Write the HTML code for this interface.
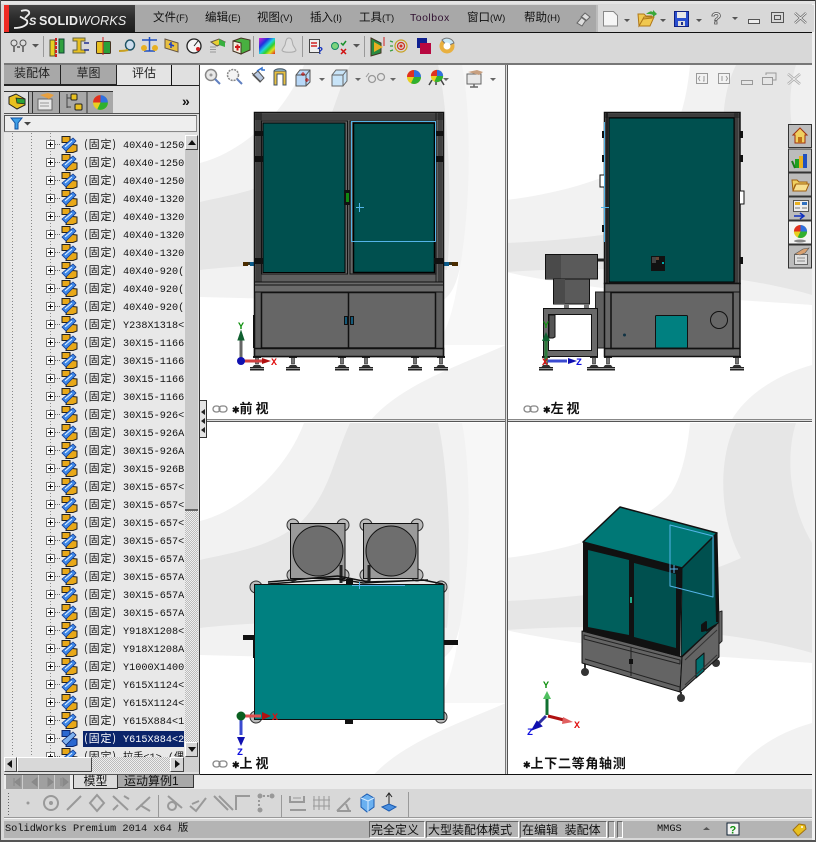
<!DOCTYPE html>
<html><head><meta charset="utf-8"><style>
html,body{margin:0;padding:0;background:#d8d8d8}
#w{position:relative;width:816px;height:842px;overflow:hidden;background:#d8d8d8;font-family:"Liberation Sans","WenQuanYi Zen Hei","Noto Sans CJK SC",sans-serif}
.a{position:absolute}
.m{position:absolute;top:11px;font-size:11.5px;line-height:15px;color:#111;white-space:nowrap}
.r{position:absolute;left:0;width:185px;height:18px;overflow:hidden}
.r svg{position:absolute;left:44px;top:0;width:36px;height:18px}
.r i{position:absolute;left:84px;top:2px;font-style:normal;font-size:10.2px;line-height:14px;color:#111;white-space:pre;font-family:"Liberation Mono","WenQuanYi Zen Hei",monospace}
.r b{font-weight:400;font-size:11px;font-family:"WenQuanYi Zen Hei","Noto Sans CJK SC",sans-serif;letter-spacing:.9px;margin-right:6px}
.r.s i{background:#0a246a;color:#fff;left:83px;padding-left:1px;width:100px}
.t{position:absolute;top:65px;height:20px;font-size:12px;line-height:17px;text-align:center;color:#222;box-sizing:border-box;background:#a8a8a8;border-right:1px solid #222;border-bottom:1px solid #222}
.ck{background-color:#eee;background-image:linear-gradient(45deg,#bbb 25%,transparent 25%,transparent 75%,#bbb 75%),linear-gradient(45deg,#bbb 25%,transparent 25%,transparent 75%,#bbb 75%);background-size:2px 2px;background-position:0 0,1px 1px}
.btn{position:absolute;background:#d4d4d4;border:1px solid;border-color:#fff #444 #444 #fff;box-sizing:border-box}
.f{position:absolute;top:821px;height:17px;font-size:12px;line-height:16px;background:#b4b4b4;border:1px solid;border-color:#666 #fff #fff #666;box-sizing:border-box;white-space:pre;color:#111;padding-left:1px}
.lb{position:absolute;font-size:13px;line-height:14px;font-weight:700;color:#111;white-space:nowrap;font-family:"Liberation Sans","WenQuanYi Zen Hei","Noto Sans CJK SC",sans-serif}
svg{display:block}
</style></head><body><div id="w">

<svg width="0" height="0" style="position:absolute"><defs>
<symbol id="bg" viewBox="0 0 306 356">
<rect width="306" height="356" fill="#fff"/>
<path d="M262 0H306V280H236C262 250 270 150 262 0Z" fill="#f7f7f7"/>
<path d="M0 98C40 88 85 50 104 0H262C270 40 272 120 262 190C258 220 250 235 236 238L0 232Z" fill="#f2f2f2"/>
<path d="M150 0C132 40 130 70 100 100C70 125 30 130 0 137V205C60 198 190 195 247 205C252 160 250 50 238 0Z" fill="#e6e6e6"/>
<path d="M306 280C260 300 200 320 170 356H306Z" fill="#f2f2f2"/>
</symbol>
<symbol id="bg2" viewBox="0 0 306 356">
<rect width="306" height="356" fill="#fff"/>
<path d="M0 135C60 128 130 108 165 70C178 50 182 20 184 0H306V240C260 236 100 230 0 207Z" fill="#f2f2f2"/>
<path d="M230 0C210 40 215 100 235 135C170 165 70 175 0 178V207C100 200 220 205 306 230V0Z" fill="#e6e6e6"/>
<path d="M290 0C280 30 282 80 306 120V0Z" fill="#f0f0f0"/>
<path d="M306 300C270 310 240 330 225 356H306Z" fill="#f2f2f2"/>
</symbol>
<symbol id="ti" viewBox="0 0 36 18">
<rect x="2.5" y="5.5" width="8" height="8" fill="#fff" stroke="#777"/><path d="M4 9.5h5M6.5 7v5" stroke="#111"/>
<path d="M11 9.5h5" stroke="#666" stroke-dasharray="1 1"/>
<path d="M18 1.500h8v6h-8z" fill="#e8a818" stroke="#222" stroke-width="1"/>
<path d="M24 9l9 1v6l-4 1.500h-7z" fill="#e8a818" stroke="#222" stroke-width="1"/>
<path d="M18 12L29 3l3 3-10 10z" fill="#3f88e8" stroke="#123a90" stroke-width=".8"/>
<path d="M21 12l7-6" stroke="#e8f4ff"/>
</symbol>
<symbol id="tis" viewBox="0 0 36 18">
<rect x="2.5" y="5.5" width="8" height="8" fill="#fff" stroke="#777"/><path d="M4 9.5h5M6.5 7v5" stroke="#111"/>
<path d="M11 9.5h5" stroke="#666" stroke-dasharray="1 1"/>
<path d="M18 1.500h8v6h-8z" fill="#2a68d0" stroke="#0a246a"/>
<path d="M24 9l9 1v6l-4 1.500h-7z" fill="#2a68d0" stroke="#0a246a"/>
<path d="M18 12L29 3l3 3-10 10z" fill="#7fb2f0" stroke="#0a246a" stroke-width=".8"/>
</symbol>
<symbol id="foot" viewBox="0 0 14 15">
<rect x="5.500" y="0" width="3" height="8" fill="#777" stroke="#222" stroke-width=".6"/><rect x="3" y="0" width="8" height="2" fill="#222"/>
<path d="M4 9h6l1.500 2h-9z" fill="#333"/><rect x="0" y="11" width="14" height="1.500" fill="#222"/><rect x="0" y="13" width="14" height="1.500" fill="#222"/>
</symbol>
<symbol id="ball" viewBox="0 0 16 16">
<circle cx="8" cy="8" r="7" fill="#e8d020"/><path d="M8 8V1A7 7 0 0 1 15 8Z" fill="#3070e0"/><path d="M8 8V1A7 7 0 0 0 1 8Z" fill="#e03020"/><path d="M8 8H15A7 7 0 0 1 5 14.300Z" fill="#30b030"/>
</symbol>
</defs></svg>

<!-- window frame -->
<div class="a" style="left:0;top:0;width:816px;height:4px;background:#e4e4e4;border-top:1px solid #333;box-sizing:border-box"></div>
<div class="a" style="left:0;top:0;width:1px;height:842px;background:#555"></div>
<div class="a" style="left:815px;top:0;width:1px;height:842px;background:#555"></div>
<div class="a" style="left:812px;top:4px;width:3px;height:836px;background:#f2f2f2"></div>
<div class="a" style="left:0;top:840px;width:816px;height:2px;background:#555"></div>

<!-- title -->
<div class="a" style="left:4px;top:5px;width:5px;height:27px;background:#ee2b24"></div>
<div class="a" style="left:9px;top:5px;width:126px;height:27px;background:linear-gradient(#444,#2b2b2b 50%,#1d1d1d)"></div>
<svg class="a" style="left:12px;top:7px" width="26" height="24"><path d="M2 21C10 21 17 18 15 13.500L8 9.500M9 4C15 2 18 4 17 7L13 11" fill="none" stroke="#eee" stroke-width="1.800"/><text x="17" y="18" font-family="Liberation Sans" font-size="11" font-style="italic" font-weight="700" fill="#eee">S</text></svg>
<div class="a" style="left:39px;top:13px;font-size:12.5px;line-height:16px;font-weight:700;color:#eee;white-space:nowrap;letter-spacing:.2px"><span>SOLID</span><span style="font-weight:400;font-style:italic">WORKS</span></div>
<div class="a" style="left:135px;top:5px;width:461px;height:27px;background:#a8a8a8"></div>
<div class="a" style="left:596px;top:5px;width:216px;height:27px;background:#d8d8d8;border-left:2px solid #bbb"></div>
<div class="a" style="left:4px;top:32px;width:808px;height:1px;background:#111"></div>
<span class="m" style="left:153px;">文件<small style="font-size:9.5px">(F)</small></span>
<span class="m" style="left:205px;">编辑<small style="font-size:9.5px">(E)</small></span>
<span class="m" style="left:257px;">视图<small style="font-size:9.5px">(V)</small></span>
<span class="m" style="left:310px;">插入<small style="font-size:9.5px">(I)</small></span>
<span class="m" style="left:359px;">工具<small style="font-size:9.5px">(T)</small></span>
<span class="m" style="left:410px;font-size:10.5px;letter-spacing:.5px;color:#301030">Toolbox</span>
<span class="m" style="left:467px;">窗口<small style="font-size:9.5px">(W)</small></span>
<span class="m" style="left:524px;">帮助<small style="font-size:9.5px">(H)</small></span>

<!-- top toolbar icons + all vector art -->
<svg class="a" style="left:0;top:0" width="816" height="132">
<path d="M577 23l5-6 4 3-4 6zM585 13l5 4-4 4-5-4z" fill="#ddd" stroke="#666"/>
<path d="M603.500 11.500h10l4 4v10.500h-14z" fill="#f6f6f6" stroke="#888"/>
<path d="M639 26l-1-12h6l2 2h6v2l-9 1zM639 26l5-9h10l-4 9z" fill="#f0c850" stroke="#b07818"/><path d="M646 14c4-3 5-3 7-2v-2l4 4-4 3v-2c-2-1-4-1-7-1z" fill="#3aa83a"/>
<rect x="674.500" y="11.500" width="14" height="15" fill="#2a4fd0" stroke="#102080"/><rect x="677" y="12" width="9" height="6" fill="#e8e8e8"/><rect x="678" y="21" width="7" height="5" fill="#ddd"/><rect x="681" y="22" width="2" height="3" fill="#20308a"/>
<g fill="#555"><path d="M624 19h6l-3 3zM660 19h6l-3 3zM696 19h6l-3 3zM732 17h6l-3 3zM32 44h7l-3.500 3.500zM353 44h7l-3.500 3.500z"/></g>
<text x="711" y="24" font-family="Liberation Sans" font-size="17" font-weight="700" fill="#e8e8e8" stroke="#555" stroke-width=".8">?</text>
<rect x="748.500" y="19.500" width="11" height="4" fill="#eee" stroke="#555"/>
<rect x="771.500" y="12.500" width="12" height="10" fill="none" stroke="#555"/><rect x="774.500" y="15.500" width="6" height="4" fill="none" stroke="#555"/>
<path d="M795 13l11 10M806 13l-11 10" stroke="#666" stroke-width="2.500"/>
<path d="M795 13l11 10M806 13l-11 10" stroke="#eee" stroke-width="1"/>

<g>
<circle cx="14" cy="43" r="3" fill="#ddd" stroke="#555"/><circle cx="23" cy="43" r="3" fill="#ddd" stroke="#555"/><path d="M14 46v6M23 46v6M17 47h3" stroke="#555" stroke-width="1.500"/>
<path d="M43.500 36v21" stroke="#999"/>
<path d="M50 40h5v16h-5z" fill="#e8d020" stroke="#553"/><path d="M59 39h5v14h-5z" fill="#30a040" stroke="#143"/><path d="M56 38v20" stroke="#d02020" stroke-width="2" stroke-dasharray="3 1"/>
<path d="M73 38h12v3h-4v9h4v3h-12v-3h4v-9h-4z" fill="#e8c020" stroke="#664"/><path d="M84 43h5M84 50h5" stroke="#203090" stroke-width="1.500"/>
<rect x="96.500" y="41.500" width="14" height="12" rx="1" fill="#e8c020" stroke="#432"/><rect x="103" y="42" width="7" height="11" fill="#28a038"/><path d="M103 37v18" stroke="#d02020"/>
<ellipse cx="130" cy="45" rx="4.500" ry="5" fill="#cde" stroke="#256" stroke-width="1.500"/><path d="M119 51c3 0 6 0 9-1" stroke="#c8a020" stroke-width="2" fill="none"/>
<path d="M142 40h15M149.500 37v14M144 51h11" stroke="#2050c0" stroke-width="1.500"/><circle cx="144" cy="48" r="3" fill="#e8b020"/><circle cx="155" cy="48" r="3" fill="#e8b020"/>
<path d="M165 39l13 4v9l-13-4z" fill="#e8c040" stroke="#654"/><path d="M169 44l5 2M171 42v6" stroke="#2040c0" stroke-width="1.500"/>
<circle cx="194" cy="46" r="7" fill="#f4f4f4" stroke="#222" stroke-width="1.300"/><path d="M194 46l4-5" stroke="#222"/><circle cx="198" cy="49" r="2" fill="#d02020"/>
<path d="M211 42l8-3 6 3-8 4z" fill="#e8d030" stroke="#654"/><path d="M219 39l6 3v5l-6-2z" fill="#38b040"/><path d="M210 47h6M210 49.500h6M210 52h6" stroke="#999"/>
<path d="M233 41l8-3 9 2v10l-9 4-8-3z" fill="#48b040" stroke="#432"/><path d="M233 41l8 2v11l-8-3z" fill="#f4f0e0" stroke="#432"/><path d="M235 47h5M237.500 44.500v6" stroke="#d01818" stroke-width="2"/>
<path d="M253.500 36v21" stroke="#999"/>
<defs><linearGradient id="rb" x1="0" y1="0" x2="1" y2="1"><stop offset="0" stop-color="#e020d0"/><stop offset=".3" stop-color="#2030e0"/><stop offset=".5" stop-color="#20d0e0"/><stop offset=".65" stop-color="#30d030"/><stop offset=".8" stop-color="#e0e020"/><stop offset="1" stop-color="#e02020"/></linearGradient></defs>
<rect x="259" y="38" width="16" height="16" fill="url(#rb)"/>
<path d="M289 38c3 0 3 3 4 7l3 5c0 3-14 3-14 0l3-5c1-4 1-7 4-7z" fill="#ddd" stroke="#aaa"/>
<path d="M302.500 36v21" stroke="#999"/>
<rect x="309.500" y="39.500" width="10" height="13" fill="#eee" stroke="#444"/><path d="M311 43h6M311 46h6" stroke="#d02020" stroke-width="1.500"/><text x="317" y="54" font-family="Liberation Sans" font-size="10" font-weight="700" fill="#1030c0">?</text>
<circle cx="335" cy="46" r="3.500" fill="#7cd47c" stroke="#186"/><path d="M341 43l2 2 3-4" stroke="#18902a" fill="none" stroke-width="1.500"/><path d="M341 49l5 5M346 49l-5 5" stroke="#d01010" stroke-width="1.500"/>
<path d="M364.500 36v21" stroke="#999"/>
<path d="M371 38l10 5v10l-10 3z" fill="#2a8a40" stroke="#432"/><path d="M374 42l9 5-9 5z" fill="#e8b020"/><path d="M384 37v9" stroke="#d02020"/>
<g fill="none" stroke-width="1.200"><circle cx="401" cy="46" r="6" stroke="#c8a020"/><circle cx="401" cy="46" r="3.500" stroke="#d03020"/><circle cx="401" cy="46" r="1.500" fill="#d03020" stroke="none"/><path d="M393 42l-3-1M393 46h-3M393 50l-3 1" stroke="#38a040"/></g>
<rect x="417" y="38" width="10" height="10" fill="#102090"/><rect x="420" y="43" width="11" height="11" fill="#b80840"/>
<circle cx="447" cy="46" r="7.500" fill="#e8b040"/><path d="M447 46l7-3a7.500 7.500 0 0 0-12-3z" fill="#c8e8f8" stroke="#777"/><circle cx="447" cy="46" r="3.500" fill="#fff"/>
</g>
</svg>

<div class="a" style="left:4px;top:63px;width:808px;height:2px;background:#777"></div>

<!-- left panel -->
<div class="a" style="left:4px;top:65px;width:195px;height:710px;background:#e0e0e0"></div>
<div class="a" style="left:199px;top:65px;width:1px;height:710px;background:#333"></div>
<div class="t" style="left:4px;width:57px">装配体</div>
<div class="t" style="left:61px;width:56px">草图</div>
<div class="t" style="left:117px;width:55px;background:#e4e4e4;border-bottom:1px solid #222;height:21px;font-size:12px;border-right:1px solid #111">评估</div>
<div class="a" style="left:172px;top:85px;width:27px;height:1px;background:#222"></div>
<div class="a" style="left:4px;top:85px;width:113px;height:1px;background:#222"></div>

<div class="a" style="left:4px;top:91px;width:109px;height:22px;background:#a8a8a8;border-top:1px solid #333;box-sizing:border-box"></div>
<div class="a" style="left:4px;top:91px;width:25px;height:22px;background:#e0e0e0;border-top:1px solid #333;border-right:1px solid #333;box-sizing:border-box"></div>
<div class="a" style="left:4px;top:113px;width:195px;height:1px;background:#555"></div>
<svg class="a" style="left:4px;top:90px" width="120" height="24">
<path d="M5 7l7-3 9 5v6l-8 4-8-5z" fill="#e8c020" stroke="#222"/><path d="M12 8l9 1v5l-8-1z" fill="#28a038" stroke="#222" stroke-width=".7"/>
<path d="M28.500 1v22M55.500 1v22M83 1v22" stroke="#333"/>
<rect x="34" y="9" width="14" height="11" fill="#e8e8e8" stroke="#666"/><path d="M36 5l8-2 6 2-5 4z" fill="#e8a040"/><path d="M36 13h9M36 16h9" stroke="#999"/>
<path d="M63 4v14M63 8h4M63 17h4" stroke="#444"/><rect x="67" y="4" width="6" height="6" rx="1" fill="#e8c020" stroke="#222"/><rect x="71" y="14" width="7" height="6" rx="1" fill="#e8c020" stroke="#222"/>
<use href="#ball" x="88" y="4" width="17" height="17"/>
</svg>
<div class="a" style="left:182px;top:93px;font:700 14px/16px 'Liberation Sans',sans-serif;color:#111">»</div>

<div class="a" style="left:4px;top:115px;width:193px;height:17px;background:#eee;border:1px solid #555;border-color:#555 #888 #888 #555;box-sizing:border-box"></div>
<svg class="a" style="left:10px;top:116px" width="26" height="15"><path d="M1 2h11L8 7v6H5V7z" fill="#3ea0e8" stroke="#1050a0"/><path d="M14 6h7l-3.500 3.500z" fill="#444"/></svg>

<!-- tree -->
<div class="a" style="left:4px;top:133px;width:181px;height:624px;background:#e8e8e8;overflow:hidden">
<svg class="a" style="left:0;top:0" width="60" height="624"><path d="M8.500 0V624M27.500 0V624M46.500 0V624" stroke="#888" stroke-dasharray="1 2"/></svg>
<div style="position:absolute;left:-4px;top:-133px;width:185px;height:770px">
<div class="r" style="top:135px"><svg><use href="#ti"/></svg><i><b>(固定)</b>40X40-1250</i></div>
<div class="r" style="top:153px"><svg><use href="#ti"/></svg><i><b>(固定)</b>40X40-1250</i></div>
<div class="r" style="top:171px"><svg><use href="#ti"/></svg><i><b>(固定)</b>40X40-1250</i></div>
<div class="r" style="top:189px"><svg><use href="#ti"/></svg><i><b>(固定)</b>40X40-1320</i></div>
<div class="r" style="top:207px"><svg><use href="#ti"/></svg><i><b>(固定)</b>40X40-1320</i></div>
<div class="r" style="top:225px"><svg><use href="#ti"/></svg><i><b>(固定)</b>40X40-1320</i></div>
<div class="r" style="top:243px"><svg><use href="#ti"/></svg><i><b>(固定)</b>40X40-1320</i></div>
<div class="r" style="top:261px"><svg><use href="#ti"/></svg><i><b>(固定)</b>40X40-920(</i></div>
<div class="r" style="top:279px"><svg><use href="#ti"/></svg><i><b>(固定)</b>40X40-920(</i></div>
<div class="r" style="top:297px"><svg><use href="#ti"/></svg><i><b>(固定)</b>40X40-920(</i></div>
<div class="r" style="top:315px"><svg><use href="#ti"/></svg><i><b>(固定)</b>Y238X1318&lt;</i></div>
<div class="r" style="top:333px"><svg><use href="#ti"/></svg><i><b>(固定)</b>30X15-1166</i></div>
<div class="r" style="top:351px"><svg><use href="#ti"/></svg><i><b>(固定)</b>30X15-1166</i></div>
<div class="r" style="top:369px"><svg><use href="#ti"/></svg><i><b>(固定)</b>30X15-1166</i></div>
<div class="r" style="top:387px"><svg><use href="#ti"/></svg><i><b>(固定)</b>30X15-1166</i></div>
<div class="r" style="top:405px"><svg><use href="#ti"/></svg><i><b>(固定)</b>30X15-926&lt;</i></div>
<div class="r" style="top:423px"><svg><use href="#ti"/></svg><i><b>(固定)</b>30X15-926A</i></div>
<div class="r" style="top:441px"><svg><use href="#ti"/></svg><i><b>(固定)</b>30X15-926A</i></div>
<div class="r" style="top:459px"><svg><use href="#ti"/></svg><i><b>(固定)</b>30X15-926B</i></div>
<div class="r" style="top:477px"><svg><use href="#ti"/></svg><i><b>(固定)</b>30X15-657&lt;</i></div>
<div class="r" style="top:495px"><svg><use href="#ti"/></svg><i><b>(固定)</b>30X15-657&lt;</i></div>
<div class="r" style="top:513px"><svg><use href="#ti"/></svg><i><b>(固定)</b>30X15-657&lt;</i></div>
<div class="r" style="top:531px"><svg><use href="#ti"/></svg><i><b>(固定)</b>30X15-657&lt;</i></div>
<div class="r" style="top:549px"><svg><use href="#ti"/></svg><i><b>(固定)</b>30X15-657A</i></div>
<div class="r" style="top:567px"><svg><use href="#ti"/></svg><i><b>(固定)</b>30X15-657A</i></div>
<div class="r" style="top:585px"><svg><use href="#ti"/></svg><i><b>(固定)</b>30X15-657A</i></div>
<div class="r" style="top:603px"><svg><use href="#ti"/></svg><i><b>(固定)</b>30X15-657A</i></div>
<div class="r" style="top:621px"><svg><use href="#ti"/></svg><i><b>(固定)</b>Y918X1208&lt;</i></div>
<div class="r" style="top:639px"><svg><use href="#ti"/></svg><i><b>(固定)</b>Y918X1208A</i></div>
<div class="r" style="top:657px"><svg><use href="#ti"/></svg><i><b>(固定)</b>Y1000X1400</i></div>
<div class="r" style="top:675px"><svg><use href="#ti"/></svg><i><b>(固定)</b>Y615X1124&lt;</i></div>
<div class="r" style="top:693px"><svg><use href="#ti"/></svg><i><b>(固定)</b>Y615X1124&lt;</i></div>
<div class="r" style="top:711px"><svg><use href="#ti"/></svg><i><b>(固定)</b>Y615X884&lt;1</i></div>
<div class="r s" style="top:729px"><svg><use href="#tis"/></svg><i><b>(固定)</b>Y615X884&lt;2</i></div>
<div class="r" style="top:747px"><svg><use href="#ti"/></svg><i><b>(固定)</b>拉手&lt;1&gt; (偶</i></div>
</div>
</div>

<!-- v scrollbar -->
<div class="a ck" style="left:185px;top:135px;width:13px;height:622px"></div>
<div class="a" style="left:185px;top:150px;width:13px;height:361px;background:#c8c8c8;border-bottom:2px solid #666;box-sizing:border-box"></div>
<div class="btn" style="left:185px;top:135px;width:13px;height:15px"></div>
<div class="a" style="left:188px;top:140px;border:4px solid transparent;border-bottom:5px solid #111;border-top:0"></div>
<div class="btn" style="left:185px;top:742px;width:13px;height:15px"></div>
<div class="a" style="left:188px;top:747px;border:4px solid transparent;border-top:5px solid #111;border-bottom:0"></div>
<!-- h scrollbar -->
<div class="a ck" style="left:4px;top:757px;width:180px;height:15px"></div>
<div class="btn" style="left:4px;top:757px;width:13px;height:15px"></div>
<div class="a" style="left:7px;top:760px;border:4px solid transparent;border-right:5px solid #111;border-left:0"></div>
<div class="btn" style="left:17px;top:757px;width:75px;height:15px;background:#d8d8d8"></div>
<div class="btn" style="left:170px;top:757px;width:14px;height:15px"></div>
<div class="a" style="left:175px;top:760px;border:4px solid transparent;border-left:5px solid #111;border-right:0"></div>
<div class="a" style="left:184px;top:757px;width:15px;height:15px;background:#d0d0d0"></div>

<!-- graphics area -->
<div class="a" style="left:200px;top:65px;width:612px;height:709px;background:#fff;overflow:hidden">
<svg class="a" style="left:0;top:0" width="612" height="709">
<use href="#bg" x="0" y="0" width="306" height="356"/>
<use href="#bg2" x="306" y="0" width="306" height="356"/>
<use href="#bg" x="0" y="358" width="306" height="356"/>
<use href="#bg2" x="306" y="358" width="306" height="356"/>
</svg>
</div>
<div class="a" style="left:200px;top:774px;width:612px;height:1px;background:#111"></div>
<!-- dividers -->
<div class="a" style="left:200px;top:419px;width:612px;height:1px;background:#888"></div>
<div class="a" style="left:200px;top:420px;width:612px;height:1px;background:#ddd"></div>
<div class="a" style="left:200px;top:421px;width:612px;height:1px;background:#555"></div>
<div class="a" style="left:505px;top:65px;width:1px;height:709px;background:#777"></div>
<div class="a" style="left:506px;top:65px;width:1px;height:709px;background:#ddd"></div>
<div class="a" style="left:507px;top:65px;width:1px;height:709px;background:#555"></div>
<!-- collapse handle -->
<div class="a" style="left:200px;top:400px;width:7px;height:38px;background:#e4e4e4;border:1px solid #333;border-left:0;box-sizing:border-box"></div>
<svg class="a" style="left:200px;top:405px" width="6" height="32"><path d="M5 4v6L1 7zM5 13v6l-4-3zM5 22v6l-4-3z" fill="#222"/></svg>

<!-- view toolbar icons -->
<svg class="a" style="left:200px;top:65px" width="300" height="30">
<circle cx="11" cy="10" r="5.500" fill="#e8e8e8" stroke="#888" stroke-width="1.500"/><circle cx="11" cy="10" r="1.500" fill="#999"/><path d="M15 14l5 5" stroke="#6080c0" stroke-width="2"/>
<circle cx="33" cy="10" r="5.500" fill="#f4f4f4" stroke="#888" stroke-width="1.500" stroke-dasharray="2 1"/><path d="M37 14l5 5" stroke="#6080c0" stroke-width="2"/>
<path d="M52 8l9 9M53 10l5-4 6 7-4 4z" fill="#b8c8e0" stroke="#555"/><path d="M57 6l5-3v2h3" stroke="#3070d0" stroke-width="1.500" fill="none"/>
<path d="M74 6h12v14h-3v-11h-6v11h-3z" fill="#e8c040" stroke="#456"/><path d="M74 6c2-3 10-3 12 0" fill="#8ab" stroke="#456"/>
<path d="M96 10l4-5h10v12l-4 4H96z" fill="#b8d8f8" stroke="#555"/><path d="M96 10h10v11M106 10l4-5" fill="none" stroke="#555"/><path d="M103 7v4M101 9h4M107 13v4M105 15h4" stroke="#c02020"/>
<path d="M119 13h6l-3 3zM155 13h6l-3 3zM190 13h6l-3 3zM243 13h6l-3 3zM290 13h6l-3 3z" fill="#666"/>
<path d="M132 10l4-5h11v11l-4 5h-11z" fill="#c8e4f8" stroke="#666"/><path d="M132 10h11v11M143 10l4-5" fill="none" stroke="#666"/>
<circle cx="172" cy="14" r="3.500" fill="none" stroke="#999" stroke-width="1.300"/><circle cx="181" cy="12" r="3.500" fill="none" stroke="#999" stroke-width="1.300"/><path d="M169 8l-3 4" stroke="#999"/>
<use href="#ball" x="206" y="4" width="16" height="16"/>
<use href="#ball" x="230" y="4" width="14" height="14"/><path d="M229 20l3-5M244 20l-3-5M236 20v-3" stroke="#444" stroke-width="1.500"/>
<rect x="267" y="9" width="14" height="10" fill="#e8e8e8" stroke="#666"/><path d="M268 7l9-2 6 2-4 3z" fill="#c8a080"/><path d="M270 22h8M274 19v3" stroke="#666" stroke-width="1.500"/>
</svg>
<!-- viewport controls -->
<svg class="a" style="left:690px;top:65px" width="120" height="25">
<g fill="none" stroke="#999"><rect x="6.500" y="8.500" width="11" height="10"/><path d="M10 11l-1.500 2.500L10 16M14 11v5h-1"/>
<rect x="28.500" y="8.500" width="11" height="10"/><path d="M32 11v5M36 11l1.500 2.500L36 16"/>
<rect x="51.500" y="15.500" width="11" height="4"/><rect x="72.500" y="12.500" width="10" height="7"/><path d="M76 10v-2h10v7h-3"/></g>
<path d="M98 9l12 10M110 9l-12 10" stroke="#aaa" stroke-width="2.500"/><path d="M98 9l12 10M110 9l-12 10" stroke="#eee" stroke-width="1"/>
</svg>

<!-- 3D views -->
<svg class="a" style="left:0;top:0" width="816" height="842">
<!-- FRONT -->
<g>
<path d="M243 262h12v3h-12zM443 262h15v3h-15z" fill="#332"/><rect x="243" y="262" width="5" height="4" fill="#4a2c00"/><rect x="250" y="262" width="5" height="4" fill="#0a5a8a"/><rect x="444" y="262" width="5" height="4" fill="#0a5a8a"/><rect x="452" y="262" width="6" height="4" fill="#4a2c00"/>
<use href="#foot" x="250" y="356" width="14" height="15"/><use href="#foot" x="286" y="356" width="14" height="15"/><use href="#foot" x="335" y="356" width="14" height="15"/><use href="#foot" x="359" y="356" width="14" height="15"/><use href="#foot" x="408" y="356" width="14" height="15"/><use href="#foot" x="434" y="356" width="14" height="15"/>
<rect x="254.500" y="112.500" width="189" height="244" fill="#5f5f5f" stroke="#111" stroke-width="1.500"/>
<path d="M255 115h188M255 117h188M255 119h188M257 112v171M259 112v171M261 112v171M436 112v171M439 112v171M441 112v171" stroke="#111" stroke-width=".8"/>
<rect x="261.500" y="121" width="86" height="153" fill="#666" stroke="#111"/><rect x="350" y="121" width="86" height="153" fill="#666" stroke="#111"/>
<rect x="263" y="123" width="82" height="149.500" fill="#00504f" stroke="#000"/>
<rect x="353.500" y="123" width="81" height="149.500" fill="#00504f" stroke="#000" stroke-width="1.500"/>
<rect x="344" y="190" width="6" height="15" fill="#111"/><rect x="346" y="193" width="3" height="9" fill="#118811"/>
<rect x="254.500" y="282" width="189" height="10" fill="#6a6a6a" stroke="#111"/><path d="M255 285h188" stroke="#111"/>
<rect x="261.500" y="292.500" width="174" height="55.500" fill="#666" stroke="#111" stroke-width="1.500"/>
<path d="M348.500 292v56" stroke="#111" stroke-width="1.500"/>
<rect x="344.500" y="316.500" width="3" height="8" fill="#145a7a" stroke="#111"/><rect x="350.500" y="316.500" width="3" height="8" fill="#145a7a" stroke="#111"/>
<rect x="254.500" y="348.500" width="189" height="8" fill="#666" stroke="#111" stroke-width="1.500"/>
<path d="M253.500 315v33" stroke="#111"/>
<g fill="#111"><rect x="254" y="131" width="9" height="5"/><rect x="254" y="156" width="9" height="6"/><rect x="254" y="258" width="9" height="6"/><rect x="436" y="131" width="8" height="5"/><rect x="436" y="156" width="8" height="6"/><rect x="434" y="258" width="10" height="6"/></g>
<rect x="351.500" y="121.500" width="84" height="120" fill="none" stroke="#54b4e8" stroke-width="1"/>
<path d="M356 207.500h8M359.500 203v9" stroke="#54b4e8"/>
</g>
<!-- LEFT -->
<g>
<use href="#foot" x="539" y="356" width="14" height="15"/><use href="#foot" x="587" y="356" width="14" height="15"/><use href="#foot" x="601" y="356" width="14" height="15"/><use href="#foot" x="730" y="356" width="14" height="15"/>
<rect x="595.500" y="292" width="9" height="56" fill="#606060" stroke="#222"/>
<rect x="604.500" y="112.500" width="135.500" height="171" fill="#555" stroke="#111" stroke-width="1.500"/>
<path d="M605 115h135M605 117h135M606.500 112v171M607.500 112v171M735 112v171M737 112v171" stroke="#111" stroke-width=".7"/>
<rect x="609" y="118" width="125" height="164" fill="#00504f" stroke="#000"/>
<rect x="651" y="256" width="14" height="15" fill="#111"/><rect x="652" y="257" width="4" height="6" fill="#444"/><rect x="656" y="257" width="3" height="3" fill="#643"/><rect x="662" y="262" width="2" height="2" fill="#0aa"/>
<path d="M597 260h8" stroke="#222" stroke-width="3"/>
<rect x="545.500" y="254.500" width="52" height="24.500" fill="#5a5a5a" stroke="#111"/><rect x="546" y="255" width="15" height="24" fill="#4a4a4a"/>
<rect x="553.500" y="279" width="36" height="25" fill="#5a5a5a" stroke="#111"/><rect x="554" y="279" width="11" height="25" fill="#4a4a4a"/>
<rect x="564" y="304" width="5" height="5" fill="#777"/><rect x="584" y="304" width="5" height="5" fill="#777"/>
<rect x="543.500" y="308.500" width="54" height="48" fill="#6a6a6a" stroke="#111"/><rect x="548.500" y="314.500" width="43" height="36" fill="#fff" stroke="#111"/><path d="M549 315h6v22l-2 1h-4z" fill="#555" stroke="#111"/>
<rect x="604.500" y="283.500" width="135.500" height="73" fill="#666" stroke="#111" stroke-width="1.500"/>
<path d="M605 292h135" stroke="#111"/>
<rect x="611" y="292.500" width="122" height="56" fill="#666" stroke="#111" stroke-width="1.500"/>
<path d="M605 348.500h135" stroke="#111" stroke-width="1.500"/>
<rect x="655.500" y="315.500" width="32" height="32.500" rx="1" fill="#008080" stroke="#111"/>
<circle cx="719" cy="320" r="8.500" fill="none" stroke="#111"/>
<circle cx="624.500" cy="335" r="1.500" fill="#134"/>
<g fill="#111"><rect x="602" y="131" width="2" height="7"/><rect x="602" y="155" width="2" height="7"/><rect x="602" y="225" width="2" height="7"/><rect x="740" y="131" width="3" height="7"/><rect x="740" y="155" width="3" height="7"/><rect x="740" y="257" width="3" height="7"/></g>
<path d="M604 175h-4v12h4M740 191h4v13h-4" fill="#fff" stroke="#111"/>
<path d="M604.500 122v120" stroke="#54b4e8" stroke-width="1"/><path d="M601 207.500h8" stroke="#54b4e8"/>
</g>
<!-- TOP -->
<g>
<g fill="#bbb" stroke="#333"><circle cx="293" cy="525" r="6"/><circle cx="343" cy="525" r="6"/><circle cx="293" cy="575" r="6"/><circle cx="343" cy="575" r="6"/><circle cx="366" cy="525" r="6"/><circle cx="417" cy="525" r="6"/><circle cx="366" cy="575" r="6"/><circle cx="417" cy="575" r="6"/><circle cx="256" cy="587" r="6"/><circle cx="441" cy="587" r="6"/><circle cx="256" cy="717" r="6"/><circle cx="441" cy="717" r="6"/></g>
<rect x="290.500" y="523.500" width="54.500" height="55" fill="#9a9a9a" stroke="#111"/><rect x="363.500" y="523.500" width="54.500" height="55" fill="#9a9a9a" stroke="#111"/>
<circle cx="318" cy="551" r="25" fill="#6e6e6e" stroke="#111"/><circle cx="391" cy="551" r="25" fill="#6e6e6e" stroke="#111"/>
<path d="M341 565v18M369 565v18" stroke="#222" stroke-width="3"/>
<path d="M268 584l70-5 25 4 60-3 20 4M268 582l70-6 30 6 60-2" fill="none" stroke="#111" stroke-width="1.500"/>
<rect x="346" y="579" width="7" height="5" fill="#111"/>
<rect x="243" y="635" width="11" height="5" fill="#111"/><rect x="444" y="640" width="14" height="5" fill="#111"/><path d="M253.500 640v18" stroke="#111"/>
<rect x="254.500" y="584.500" width="189.500" height="135" fill="#008080" stroke="#111"/>
<rect x="345" y="719" width="8" height="5" fill="#111"/>
<path d="M352 585.500h53M359.500 582v7" stroke="#54b4e8"/>
</g>
<!-- ISO -->
<g stroke-linejoin="round">
<circle cx="585" cy="672" r="4" fill="#333"/><circle cx="681" cy="698" r="4" fill="#333"/><circle cx="716" cy="663" r="4" fill="#333"/>
<path d="M585 663v8M681 692v6M716 657v6" stroke="#333" stroke-width="2"/>
<path d="M582 631l100 26-2 35-98-29z" fill="#646464" stroke="#111"/>
<path d="M682 657l37-35v35l-39 35z" fill="#646464" stroke="#111"/>
<path d="M584 635l96 25v4l-96-25zM585 659l95 28" fill="none" stroke="#222"/><path d="M631 647v29" stroke="#222"/>
<rect x="629" y="659" width="4" height="5" fill="#111"/>
<path d="M696 660l8-7v18l-8 7z" fill="#007070" stroke="#111"/>
<path d="M685 660l32-30M685 685l32-30" stroke="#333"/>
<path d="M583 542l99 26-2 89-97-26z" fill="#111"/>
<path d="M682 568l35-35 2 89-38 35z" fill="#00504f" stroke="#111"/>
<path d="M717 533l2 89-3 0-2-86z" fill="#111"/>
<path d="M588 550l41 10v75l-41-8z" fill="#005f5c"/>
<path d="M634 563l42 11v74l-42-11z" fill="#00504f"/>
<path d="M620 507l97 26-35 35-99-26z" fill="#007876" stroke="#111" stroke-width="1.500"/>
<rect x="630" y="597" width="2" height="6" fill="#2a8"/>
<path d="M702 625l4-3v8l-4 1zM706 631l10-6" stroke="#111" stroke-width="2" fill="#111"/>
<path d="M719 612l3-1v30l-3 3z" fill="#666" stroke="#222"/>
<path d="M670 525l43 11v61l-43-11z" fill="none" stroke="#54b4e8"/>
<path d="M670 569h8M674 565v8" stroke="#54b4e8"/>
</g>

<!-- triads -->
<g font-family="Liberation Mono,monospace" font-size="10" font-weight="700">
<path d="M241 361V340" stroke="#666" stroke-width="3"/><path d="M241 331l-3 9h6z" fill="#106030" stroke="#106030"/>
<path d="M243 361h19" stroke="#d04040" stroke-width="3"/><path d="M271 361l-9-3v6z" fill="#b01010"/>
<circle cx="241" cy="361" r="4" fill="#1010b0"/><text x="238" y="329" fill="#109010">Y</text><text x="271" y="365" fill="#e01010">X</text>

<path d="M546 361V340" stroke="#2a7a3a" stroke-width="3"/><path d="M546 332l-4 9h8z" fill="#106030"/>
<path d="M548 361h19" stroke="#3a4ad0" stroke-width="3"/><path d="M577 361l-9-3v6z" fill="#1010b0"/>
<text x="543" y="328" fill="#109010">Y</text><text x="542" y="365" fill="#e01010">X</text><text x="576" y="365" fill="#1010e0">Z</text>

<path d="M241 716h20" stroke="#e05050" stroke-width="3"/><path d="M271 716l-9-4v8z" fill="#b01010"/>
<path d="M241 718v17" stroke="#3a4ad0" stroke-width="3"/><path d="M241 746l-4-9h8z" fill="#1010b0"/>
<circle cx="241" cy="716" r="4.500" fill="#0a6020"/><text x="272" y="720" fill="#e01010">X</text><text x="237" y="755" fill="#1010e0">Z</text>

<path d="M547 715V695" stroke="#107030" stroke-width="3"/><path d="M547 691l-4 8h8z" fill="#50c060"/>
<path d="M548 716l16 4" stroke="#b01010" stroke-width="3"/><path d="M573 722l-10-5-1 7z" fill="#e06060"/>
<path d="M546 716l-9 9" stroke="#3030a0" stroke-width="3"/><path d="M533 729l4-7 4 4z" fill="#1010b0" stroke="#1010b0" stroke-width="2"/>
<text x="543" y="688" fill="#109010">Y</text><text x="574" y="728" fill="#e01010">X</text><text x="527" y="735" fill="#1010e0">Z</text>
</g>

<!-- links -->
<g fill="none" stroke="#888" stroke-width="1.300"><rect x="213" y="406" width="7" height="6" rx="3"/><rect x="219" y="406" width="8" height="6" rx="3"/><rect x="524" y="406" width="7" height="6" rx="3"/><rect x="530" y="406" width="8" height="6" rx="3"/><rect x="213" y="761" width="7" height="6" rx="3"/><rect x="219" y="761" width="8" height="6" rx="3"/></g>

<!-- sketch toolbar -->
<g fill="none" stroke="#999" stroke-width="2">
<circle cx="28" cy="803" r="1.500" fill="#999" stroke="none"/>
<path d="M8.500 793v26" stroke="#666" stroke-width="1" stroke-dasharray="1 2"/>
<circle cx="51" cy="803" r="7"/><circle cx="51" cy="803" r="1" fill="#999"/>
<path d="M67 810l14-14"/>
<path d="M97 795l7 8-7 8-7-8z"/>
<path d="M113 796l15 14M113 810l5-5M124 796l5 3"/>
<path d="M136 810l14-13M140 805l10 6"/>
<path d="M158.500 795v24" stroke-width="1"/>
<circle cx="172" cy="806" r="4"/><path d="M168 796l14 12"/>
<path d="M190 806l6 5 10-13M192 804l7-3"/>
<path d="M214 796l14 14M219 796l14 14"/>
<path d="M236 810v-14h14"/>
<path d="M259 796v14M263 796h10" stroke-dasharray="2 2"/>
<circle cx="260" cy="796" r="1.500" fill="#999"/><circle cx="260" cy="810" r="1.500" fill="#999"/><circle cx="272" cy="796" r="1.500" fill="#999"/>
<path d="M281.500 795v24" stroke-width="1"/>
<path d="M290 796v6h14v-6"/><path d="M290 810h16" stroke-width="2"/><path d="M293 798h8" stroke-width="1"/>
<path d="M314 796v14M319 796v14M324 796v14M329 796v14M313 800h17M313 806h17" stroke-width="1"/>
<path d="M337 811l13-13M337 811h14M346 804l3 7"/>
</g>
<path d="M361 798l6-4 7 4v9l-7 5-6-5z" fill="#6ab0f0" stroke="#1a5ab0"/><path d="M361 798l7 3 6-3M368 801v11" stroke="#d8ecff" fill="none"/>
<path d="M389 793v14M386 797l3-4 3 4" stroke="#222" fill="none"/><path d="M382 807l7-3 7 3-7 4z" fill="#4a90e0" stroke="#1a5ab0"/>
<path d="M408.500 792v26" stroke="#999"/>
</svg>

<div class="lb" style="left:232px;top:402px"><span style="font-size:9px">✱</span><span style="letter-spacing:3px">前视</span></div>
<div class="lb" style="left:543px;top:402px"><span style="font-size:9px">✱</span><span style="letter-spacing:3px">左视</span></div>
<div class="lb" style="left:232px;top:757px"><span style="font-size:9px">✱</span><span style="letter-spacing:3px">上视</span></div>
<div class="lb" style="left:523px;top:757px"><span style="font-size:9px">✱</span><span style="letter-spacing:.7px">上下二等角轴测</span></div>

<!-- task pane -->
<svg class="a" style="left:788px;top:124px" width="24" height="146">
<g fill="#bcbcbc" stroke="#333"><rect x=".5" y=".5" width="23" height="23"/><rect x=".5" y="25" width="23" height="23"/><rect x=".5" y="49" width="23" height="23"/><rect x=".5" y="73" width="23" height="23"/><rect x=".5" y="97" width="23" height="23" fill="#f4f4f4"/><rect x=".5" y="121" width="23" height="23"/></g>
<path d="M5 11l7-7 7 7h-2v8H7v-8z" fill="#f0d060" stroke="#a03010"/><rect x="10" y="13" width="4" height="6" fill="#c07018"/>
<rect x="7" y="35" width="4" height="9" fill="#20a020"/><rect x="11" y="32" width="4" height="12" fill="#e8b020"/><rect x="15" y="30" width="4" height="14" fill="#2050c0"/><path d="M4 37l3 7" stroke="#1a7a1a" stroke-width="2"/>
<path d="M5 67l-1-11h5l2 2h8v2l-12 1z" fill="#f0d060" stroke="#a06010"/><path d="M5 67l3-7h13l-3 7z" fill="#f8e090" stroke="#a06010"/>
<rect x="5.500" y="76.500" width="15" height="11" fill="#eee" stroke="#555"/><rect x="7" y="78" width="5" height="3" fill="#e8b020"/><rect x="14" y="78" width="5" height="3" fill="#3070c0"/><path d="M7 84h5M14 84h5" stroke="#777"/><path d="M6 92h9M12 89l4 3-4 3" stroke="#1030c0" stroke-width="1.500" fill="none"/>
<use href="#ball" x="5" y="100" width="15" height="15"/><ellipse cx="12" cy="117" rx="6" ry="1.500" fill="#888"/>
<rect x="6.500" y="130.500" width="13" height="10" fill="#e0e0e0" stroke="#666"/><path d="M7 130l8-5 6-1-4 5-5 2z" fill="#d8a070" stroke="#555" stroke-width=".6"/><path d="M9 134h8M9 137h8" stroke="#888"/>
</svg>

<!-- bottom tabs -->
<div class="a" style="left:4px;top:775px;width:808px;height:14px;background:#ebebeb"></div>
<div class="a" style="left:4px;top:774px;width:196px;height:1px;background:#555"></div>
<div class="a" style="left:6px;top:775px;width:64px;height:14px;background:#a0a0a0"></div>
<svg class="a" style="left:6px;top:775px" width="64" height="14"><g fill="#8a8a8a" stroke="#888"><path d="M8 3v8M14 3v8l-5-4z"/><path d="M31 3v8l-5-4z"/><path d="M42 3v8l5-4z"/><path d="M56 3v8l-5-4zM58 3v8" transform="matrix(-1 0 0 1 113 0)"/></g><path d="M16.500 0v14M32.500 0v14M48.500 0v14" stroke="#ccc"/></svg>
<div class="a" style="left:73px;top:775px;width:45px;height:14px;background:#dcdcdc;border:1px solid #333;border-top:0;box-sizing:border-box;font-size:12px;line-height:13px;text-align:center;color:#111">模型</div>
<div class="a" style="left:118px;top:775px;width:76px;height:13px;background:#a8a8a8;border-right:1px solid #333;border-bottom:1px solid #333;box-sizing:border-box;font-size:12px;line-height:12px;padding-left:6px;color:#111;white-space:nowrap">运动算例1</div>

<!-- status bar -->
<div class="a" style="left:4px;top:817px;width:808px;height:1px;background:#999"></div>
<div class="a" style="left:4px;top:818px;width:808px;height:1px;background:#f4f4f4"></div>
<div class="a" style="left:4px;top:821px;width:808px;height:17px;background:#b4b4b4"></div>
<div class="a" style="left:5px;top:822px;font:10.3px/14px 'Liberation Mono','WenQuanYi Zen Hei',monospace;color:#111;white-space:pre">SolidWorks Premium 2014 x64 版</div>
<div class="f" style="left:369px;width:56px">完全定义</div>
<div class="f" style="left:426px;width:93px">大型装配体模式</div>
<div class="f" style="left:520px;width:87px">在编辑  装配体</div>
<div class="f" style="left:608px;width:7px"></div>
<div class="f" style="left:617px;width:6px"></div>
<div class="a" style="left:657px;top:822px;font:10.3px/14px 'Liberation Mono',monospace;color:#111">MMGS</div>
<svg class="a" style="left:700px;top:822px" width="112" height="16">
<path d="M3 8h7l-3.500-3z" fill="#555"/>
<rect x="27" y="1" width="12" height="12" fill="#f4f4f4" stroke="#123"/><text x="29.500" y="11.500" font-family="Liberation Sans" font-size="11" font-weight="700" fill="#109010">?</text>
<path d="M93 8l6-6 6 1 1 4-8 7z" fill="#e8c020" stroke="#a07010"/><circle cx="102" cy="5" r="1" fill="#fff"/>
</svg>
</div></body></html>
